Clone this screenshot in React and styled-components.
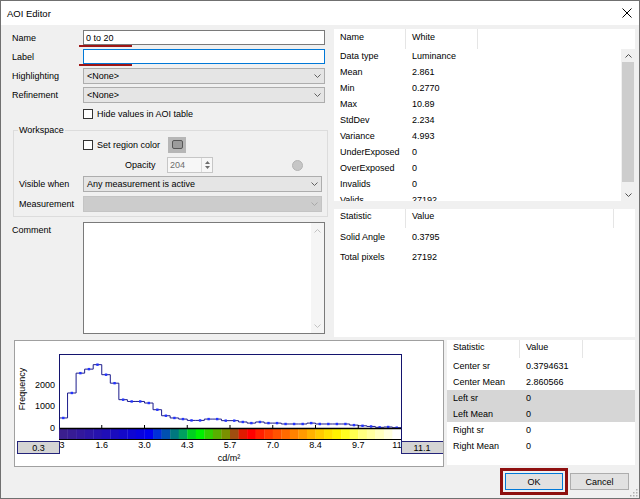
import React from 'react';
import styled, { createGlobalStyle } from 'styled-components';

const GlobalStyle = createGlobalStyle`
  html, body { margin: 0; padding: 0; background: #ffffff; }
  body {
    font-family: "Liberation Sans", Arial, sans-serif;
    font-size: 9px;
    color: #000;
  }
  * { box-sizing: border-box; }
`;

const STATS = [
  ['Data type', 'Luminance'],
  ['Mean', '2.861'],
  ['Min', '0.2770'],
  ['Max', '10.89'],
  ['StdDev', '2.234'],
  ['Variance', '4.993'],
  ['UnderExposed', '0'],
  ['OverExposed', '0'],
  ['Invalids', '0'],
  ['Valids', '27192'],
];

const REGION = [
  ['Solid Angle', '0.3795'],
  ['Total pixels', '27192'],
];

const SIDES = [
  ['Center sr', '0.3794631'],
  ['Center Mean', '2.860566'],
  ['Left sr', '0', true],
  ['Left Mean', '0', true],
  ['Right sr', '0'],
  ['Right Mean', '0'],
];

const BINS = [
  450, 1570, 2460, 2640, 2840, 2390, 2010, 1270, 1190, 1190,
  1120, 820, 550, 450, 400, 340, 340, 400, 400, 330,
  330, 270, 220, 270, 220, 220, 180, 180, 180, 220,
  180, 180, 180, 180, 130, 100, 70, 30, 45, 15,
];

const COLORS = [
  '#3b1f8e', '#371c94', '#32189c', '#2c15a4', '#2612ad', '#200eb6', '#1a0bbf', '#1408c9',
  '#0e05d4', '#0802df', '#0000ee', '#0030d8', '#0050b0', '#00787f', '#00a060', '#00d020',
  '#00f000', '#30d000', '#58b000', '#7a9000', '#a04e10', '#e01a00', '#ff0000', '#ff2000',
  '#ff3a00', '#ff5200', '#ff6a00', '#ff8200', '#ff9a00', '#ffb200', '#ffca00', '#ffe000',
  '#fff200', '#ffff20', '#ffff50', '#ffff80', '#ffffa0', '#ffffc0', '#ffffe0', '#ffffff',
];

const TICKS = ['1.6', '3.0', '4.3', '5.7', '7.0', '8.4', '9.7'];

const Window = styled.div`
  position: relative;
  width: 640px;
  height: 499px;
  border: 1px solid #707070;
  background: #f0f0f0;
  display: flex;
  flex-direction: column;
  overflow: hidden;
`;

const TitleBar = styled.div`
  flex: none;
  height: 24px;
  background: #ffffff;
  display: flex;
  align-items: center;
  justify-content: space-between;
  padding: 0 7px 0 6px;
  font-size: 9.5px;
`;

const Body = styled.div`
  flex: 1;
  display: flex;
  flex-direction: column;
  padding: 4px 4px 0 11px;
`;

const TopArea = styled.div`
  display: flex;
  gap: 5px;
  height: 307px;
  flex: none;
`;

const LeftPanel = styled.div`
  width: 317px;
  flex: none;
  display: flex;
  flex-direction: column;
  padding-top: 1px;
`;

const RightPanel = styled.div`
  flex: 1;
  display: flex;
  flex-direction: column;
  gap: 8px;
`;

const Field = styled.div`
  display: flex;
  align-items: ${p => (p.$top ? 'flex-start' : 'center')};
  height: ${p => p.$h}px;
  margin-top: ${p => p.$mt || 0}px;
  padding-right: ${p => (p.$pr === undefined ? 4 : p.$pr)}px;
  flex: none;
`;

const FieldLabel = styled.div`
  flex: none;
  width: ${p => p.$w || 71}px;
  padding-top: ${p => p.$pt || 0}px;
  white-space: nowrap;
`;

const InputWrap = styled.div`
  position: relative;
  flex: 1;
  height: 100%;

  &::after {
    content: '';
    display: ${p => (p.$marked ? 'block' : 'none')};
    position: absolute;
    left: -4px;
    bottom: -2px;
    width: 53px;
    height: 2px;
    background: #9e1616;
  }
`;

const TextInput = styled.input`
  width: 100%;
  height: 100%;
  margin: 0;
  padding: 0 2px;
  border: 1px solid ${p => (p.$focused ? '#0078d7' : '#7a7a7a')};
  background: #ffffff;
  font: inherit;
  color: #000;
  outline: none;
`;

const Select = styled.div`
  flex: 1;
  height: 100%;
  display: flex;
  align-items: center;
  justify-content: space-between;
  padding: 0 3px 0 3px;
  border: 1px solid ${p => (p.$disabled ? '#c4c4c4' : '#adadad')};
  background: ${p => (p.$disabled ? '#cccccc' : '#e5e5e5')};
  color: #000;
`;

const CheckRow = styled.div`
  display: flex;
  align-items: center;
  gap: 4px;
  width: ${p => (p.$w ? `${p.$w}px` : 'auto')};
  flex: none;
`;

const Box = styled.div`
  width: 10px;
  height: 10px;
  border: 1px solid #333333;
  background: #ffffff;
  flex: none;
`;

const Group = styled.fieldset`
  margin: 5px 1px 0 1px;
  padding: 0 5px 4px 5px;
  border: 1px solid #dcdcdc;
  min-width: 0;
  flex: none;
`;

const Legend = styled.legend`
  padding: 0 1px;
  margin-left: -1px;
  line-height: 11px;
`;

const Swatch = styled.div`
  width: 18px;
  height: 16px;
  background: #b6b6b6;
  display: flex;
  align-items: center;
  justify-content: center;
  flex: none;
`;

const SwatchInner = styled.div`
  width: 11px;
  height: 9px;
  border: 1px solid #575757;
  border-radius: 2px;
  background: #9c9c9c;
`;

const OpacityLabel = styled.div`
  width: 42px;
  margin-left: 42px;
  flex: none;
`;

const Spin = styled.div`
  width: 46px;
  height: 16px;
  border: 1px solid #c6c6c6;
  background: #f7f7f7;
  display: flex;
  color: #6d6d6d;
  flex: none;
`;

const SpinValue = styled.div`
  flex: 1;
  padding-left: 2px;
  line-height: 14px;
`;

const SpinButtons = styled.div`
  width: 11px;
  display: flex;
  flex-direction: column;
  justify-content: space-evenly;
  align-items: center;
  border-left: 1px solid #dadada;
`;

const Indicator = styled.div`
  width: 11px;
  height: 11px;
  border-radius: 50%;
  background: #c6c6c6;
  border: 1px solid #b4b4b4;
  margin-left: auto;
  margin-right: 19px;
  flex: none;
`;

const Comment = styled.div`
  flex: 1;
  height: 100%;
  display: flex;
  border: 1px solid #7a7a7a;
  background: #ffffff;
`;

const CommentText = styled.textarea`
  flex: 1;
  border: none;
  resize: none;
  outline: none;
  margin: 0;
  padding: 2px;
  font: inherit;
  background: transparent;
`;

const CommentScroll = styled.div`
  width: 13px;
  display: flex;
  flex-direction: column;
  justify-content: space-between;
  align-items: center;
  padding: 6px 0 5px;
  background: #f5f5f5;
`;

const Table = styled.div`
  background: #ffffff;
  height: ${p => p.$h}px;
  display: flex;
  flex-direction: column;
  overflow: hidden;
  flex: none;
`;

const HeaderRow = styled.div`
  display: grid;
  grid-template-columns: ${p => p.$cols};
  height: ${p => p.$h}px;
  flex: none;
`;

const HeaderCell = styled.div`
  padding: ${p => p.$pt}px 0 0 6px;
  line-height: 11px;
  border-right: 1px solid #e5e5e5;
  white-space: nowrap;

  &:last-child {
    border-right: none;
  }
`;

const TableBody = styled.div`
  flex: 1;
  display: flex;
  min-height: 0;
`;

const Rows = styled.div`
  flex: 1;
  overflow: hidden;
`;

const DataRow = styled.div`
  display: grid;
  grid-template-columns: ${p => p.$cols};
  height: ${p => p.$h}px;
  line-height: ${p => p.$lh}px;
  background: ${p => (p.$sel ? '#d6d6d6' : 'transparent')};
`;

const Cell = styled.div`
  padding-left: 6px;
  white-space: nowrap;
`;

const ScrollBar = styled.div`
  width: 14px;
  flex: none;
  display: flex;
  flex-direction: column;
  background: #f0f0f0;
`;

const ScrollArrow = styled.div`
  height: 13px;
  flex: none;
  display: flex;
  align-items: center;
  justify-content: center;
`;

const Thumb = styled.div`
  height: 120px;
  margin: 0 1px;
  background: #cdcdcd;
  flex: none;
`;

const Track = styled.div`
  flex: 1;
`;

const BottomArea = styled.div`
  display: flex;
  gap: 3px;
  margin-top: 4px;
`;

const HistPanel = styled.div`
  margin-left: 2px;
  width: 430px;
  height: 127px;
  border: 1px solid #a0a0a0;
  background: #ffffff;
  flex: none;

  svg {
    display: block;
  }
`;

const RightColumn = styled.div`
  flex: 1;
  display: flex;
  flex-direction: column;
`;

const Buttons = styled.div`
  display: flex;
  justify-content: flex-end;
  align-items: center;
  gap: 2px;
  margin-top: 3px;
  padding-right: 6px;
`;

const OkFrame = styled.div`
  border: 3px solid #8e0f0f;
  padding: 2px;
`;

const Button = styled.button`
  width: ${p => p.$w}px;
  height: 17px;
  margin: 0;
  padding: 0;
  border: 1px solid ${p => (p.$default ? '#0078d7' : '#adadad')};
  background: #e1e1e1;
  font: inherit;
  color: #000;
`;

const Grip = styled.svg`
  position: absolute;
  right: 1px;
  bottom: 1px;
`;

const Chevron = ({ up, color = '#606060' }) => (
  <svg width="7" height="4" viewBox="0 0 7 4">
    <polyline
      points={up ? '0.5,3.5 3.5,0.5 6.5,3.5' : '0.5,0.5 3.5,3.5 6.5,0.5'}
      fill="none"
      stroke={color}
      strokeWidth="1"
    />
  </svg>
);

const Triangle = ({ up }) => (
  <svg width="5" height="3" viewBox="0 0 5 3">
    <polygon points={up ? '0,3 2.5,0 5,3' : '0,0 2.5,3 5,0'} fill="#6d6d6d" />
  </svg>
);

function Histogram() {
  const x0 = 59;
  const x1 = 401;
  const y0 = 428;
  const bw = (x1 - x0) / BINS.length;
  const ys = BINS.map(v => y0 - v * 0.0223);
  let d = `M${x0},${ys[0]}`;
  BINS.forEach((v, i) => {
    if (i > 0) d += ` V${ys[i]}`;
    d += ` H${x0 + (i + 1) * bw}`;
  });
  const tick = (x1 - x0) / 8;

  return (
    <svg width="428" height="125" viewBox="15 341 428 125" fontFamily="Liberation Sans, Arial, sans-serif" fontSize="9">
      <path d={d} fill="none" stroke="#1c1c8c" strokeWidth="1" />
      {ys.map((y, i) => (
        <rect key={i} x={x0 + (i + 0.5) * bw - 1.2} y={y - 1.2} width="2.4" height="2.4" fill="#2233ff" />
      ))}
      {COLORS.map((c, i) => (
        <rect key={c + i} x={x0 + i * bw} y="429" width={bw + 0.3} height="10" fill={c} />
      ))}
      <line x1={x0} y1="428.5" x2={x1} y2="428.5" stroke="#000" strokeWidth="1.5" />
      <line x1={x0} y1="439.5" x2={x1} y2="439.5" stroke="#000" strokeWidth="1" />
      {TICKS.map((t, i) => (
        <line key={t} x1={x0 + (i + 1) * tick} y1="425" x2={x0 + (i + 1) * tick} y2="428" stroke="#000" />
      ))}
      <line x1={x0} y1="354.5" x2={x1} y2="354.5" stroke="#14146e" />
      <line x1={x0 + 0.5} y1="354" x2={x0 + 0.5} y2="429" stroke="#14146e" />
      <line x1={x1 + 0.5} y1="354" x2={x1 + 0.5} y2="442" stroke="#14146e" />

      <text x="55" y="388" textAnchor="end">2000</text>
      <text x="55" y="409" textAnchor="end">1000</text>
      <text x="55" y="431" textAnchor="end">0</text>
      <text x="25" y="389" textAnchor="middle" transform="rotate(-90 25 389)">Frequency</text>

      <text x="59.5" y="448">3</text>
      {TICKS.map((t, i) => (
        <text key={t} x={x0 + (i + 1) * tick} y="448" textAnchor="middle">{t}</text>
      ))}
      <text x="397" y="448" textAnchor="middle">11</text>
      <text x="229" y="461" textAnchor="middle">cd/m²</text>

      <rect x="17.5" y="441.5" width="42" height="12" fill="#d4d4d4" stroke="#24247a" />
      <text x="38.5" y="451" textAnchor="middle">0.3</text>
      <rect x="401.5" y="441.5" width="42" height="12" fill="#d4d4d4" stroke="#24247a" />
      <text x="422" y="451" textAnchor="middle">11.1</text>
    </svg>
  );
}

export default function App() {
  return (
    <>
      <GlobalStyle />
      <Window>
        <TitleBar>
          <span>AOI Editor</span>
          <svg width="10" height="10" viewBox="0 0 10 10">
            <path d="M0.5,0.5 L9.5,9.5 M9.5,0.5 L0.5,9.5" stroke="#000" strokeWidth="1" />
          </svg>
        </TitleBar>
        <Body>
          <TopArea>
            <LeftPanel>
              <Field $h={15}>
                <FieldLabel>Name</FieldLabel>
                <InputWrap $marked>
                  <TextInput readOnly defaultValue="0 to 20" />
                </InputWrap>
              </Field>
              <Field $h={15} $mt={4}>
                <FieldLabel>Label</FieldLabel>
                <InputWrap $marked>
                  <TextInput readOnly $focused defaultValue="" />
                </InputWrap>
              </Field>
              <Field $h={16} $mt={4}>
                <FieldLabel>Highlighting</FieldLabel>
                <Select>
                  <span>&lt;None&gt;</span>
                  <Chevron />
                </Select>
              </Field>
              <Field $h={16} $mt={3}>
                <FieldLabel>Refinement</FieldLabel>
                <Select>
                  <span>&lt;None&gt;</span>
                  <Chevron />
                </Select>
              </Field>
              <Field $h={12} $mt={5}>
                <FieldLabel />
                <CheckRow>
                  <Box />
                  <span>Hide values in AOI table</span>
                </CheckRow>
              </Field>

              <Group>
                <Legend>Workspace</Legend>
                <Field $h={15} $mt={1} $pr={0}>
                  <FieldLabel $w={64} />
                  <CheckRow $w={85}>
                    <Box />
                    <span>Set region color</span>
                  </CheckRow>
                  <Swatch>
                    <SwatchInner />
                  </Swatch>
                </Field>
                <Field $h={16} $mt={5} $pr={0}>
                  <FieldLabel $w={64} />
                  <OpacityLabel>Opacity</OpacityLabel>
                  <Spin>
                    <SpinValue>204</SpinValue>
                    <SpinButtons>
                      <Triangle up />
                      <Triangle />
                    </SpinButtons>
                  </Spin>
                  <Indicator />
                </Field>
                <Field $h={16} $mt={3} $pr={0}>
                  <FieldLabel $w={64}>Visible when</FieldLabel>
                  <Select>
                    <span>Any measurement is active</span>
                    <Chevron />
                  </Select>
                </Field>
                <Field $h={16} $mt={4} $pr={0}>
                  <FieldLabel $w={64}>Measurement</FieldLabel>
                  <Select $disabled>
                    <span />
                    <Chevron color="#a8a8a8" />
                  </Select>
                </Field>
              </Group>

              <Field $h={112} $mt={5} $top>
                <FieldLabel $pt={3}>Comment</FieldLabel>
                <Comment>
                  <CommentText readOnly />
                  <CommentScroll>
                    <Chevron up color="#c2c2c2" />
                    <Chevron color="#c2c2c2" />
                  </CommentScroll>
                </Comment>
              </Field>
            </LeftPanel>

            <RightPanel>
              <Table $h={172}>
                <HeaderRow $cols="72px 72px 1fr" $h={20}>
                  <HeaderCell $pt={3}>Name</HeaderCell>
                  <HeaderCell $pt={3}>White</HeaderCell>
                  <HeaderCell $pt={3} />
                </HeaderRow>
                <TableBody>
                  <Rows>
                    {STATS.map(([k, v]) => (
                      <DataRow key={k} $cols="72px 1fr" $h={16} $lh={14}>
                        <Cell>{k}</Cell>
                        <Cell>{v}</Cell>
                      </DataRow>
                    ))}
                  </Rows>
                  <ScrollBar>
                    <ScrollArrow>
                      <Chevron up color="#505050" />
                    </ScrollArrow>
                    <Thumb />
                    <Track />
                    <ScrollArrow>
                      <Chevron color="#505050" />
                    </ScrollArrow>
                  </ScrollBar>
                </TableBody>
              </Table>

              <Table $h={128}>
                <HeaderRow $cols="72px 208px 1fr" $h={19}>
                  <HeaderCell $pt={2}>Statistic</HeaderCell>
                  <HeaderCell $pt={2}>Value</HeaderCell>
                  <HeaderCell $pt={2} />
                </HeaderRow>
                {REGION.map(([k, v]) => (
                  <DataRow key={k} $cols="72px 1fr" $h={20} $lh={18}>
                    <Cell>{k}</Cell>
                    <Cell>{v}</Cell>
                  </DataRow>
                ))}
              </Table>
            </RightPanel>
          </TopArea>

          <BottomArea>
            <HistPanel>
              <Histogram />
            </HistPanel>
            <RightColumn>
              <Table $h={125}>
                <HeaderRow $cols="73px 63px 1fr" $h={18}>
                  <HeaderCell $pt={2}>Statistic</HeaderCell>
                  <HeaderCell $pt={2}>Value</HeaderCell>
                  <HeaderCell $pt={2} />
                </HeaderRow>
                {SIDES.map(([k, v, sel]) => (
                  <DataRow key={k} $cols="73px 1fr" $h={16} $lh={16} $sel={sel}>
                    <Cell>{k}</Cell>
                    <Cell>{v}</Cell>
                  </DataRow>
                ))}
              </Table>
              <Buttons>
                <OkFrame>
                  <Button $w={58} $default>OK</Button>
                </OkFrame>
                <Button $w={59}>Cancel</Button>
              </Buttons>
            </RightColumn>
          </BottomArea>
        </Body>
        <Grip width="9" height="9" viewBox="0 0 9 9">
          {[[7, 1], [7, 4], [4, 4], [7, 7], [4, 7], [1, 7]].map(([x, y]) => (
            <rect key={`${x}-${y}`} x={x} y={y} width="1.5" height="1.5" fill="#b0b0b0" />
          ))}
        </Grip>
      </Window>
    </>
  );
}
